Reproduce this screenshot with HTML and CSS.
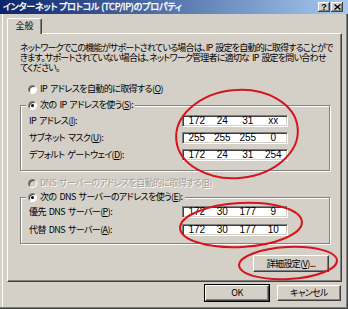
FILE: index.html
```html
<!DOCTYPE html>
<html lang="ja">
<head>
<meta charset="utf-8">
<title>インターネット プロトコル (TCP/IP)のプロパティ</title>
<link rel="stylesheet" href="styles.css">
</head>
<body>
<div class="window">
  <div class="titlebar">
    <span class="title">インターネット プロトコル (TCP/IP)のプロパティ</span>
    <div class="tbtns">
      <span class="tbtn help">?</span>
      <span class="tbtn close"><svg width="7" height="6" viewBox="0 0 7 6"><path d="M0.5 0.5 L6.5 5.5 M6.5 0.5 L0.5 5.5" stroke="#000" stroke-width="1.4" fill="none"/></svg></span>
    </div>
  </div>
  <div class="tabs"><div class="tab">全般</div></div>
  <div class="panel">
    <div class="desc">
      <div class="line">ネットワークでこの機能がサポートされている場合は、IP 設定を自動的に取得することがで</div>
      <div class="line">きます。サポートされていない場合は、ネットワーク管理者に適切な IP 設定を問い合わせ</div>
      <div class="line">てください。</div>
    </div>
    <div class="opt opt-ip-auto"><span class="radio"></span><span>IP アドレスを自動的に取得する(<u>O</u>)</span></div>
    <div class="group group-ip">
      <div class="legend"><span class="radio on"></span><span>次の IP アドレスを使う(<u>S</u>):</span></div>
      <div class="rows rows-ip">
        <span class="lbl">IP アドレス(<u>I</u>):</span>
        <div class="ip"><span>172</span><span>24</span><span>31</span><span>xx</span></div>
        <span class="lbl">サブネット マスク(<u>U</u>):</span>
        <div class="ip"><span>255</span><span>255</span><span>255</span><span>0</span></div>
        <span class="lbl">デフォルト ゲートウェイ(<u>D</u>):</span>
        <div class="ip"><span>172</span><span>24</span><span>31</span><span>254</span></div>
      </div>
    </div>
    <div class="opt opt-dns-auto disabled"><span class="radio off"></span><span>DNS サーバーのアドレスを自動的に取得する(<u>B</u>)</span></div>
    <div class="group group-dns">
      <div class="legend"><span class="radio on"></span><span>次の DNS サーバーのアドレスを使う(<u>E</u>):</span></div>
      <div class="rows rows-dns">
        <span class="lbl">優先 DNS サーバー(<u>P</u>):</span>
        <div class="ip"><span>172</span><span>30</span><span>177</span><span>9</span></div>
        <span class="lbl">代替 DNS サーバー(<u>A</u>):</span>
        <div class="ip"><span>172</span><span>30</span><span>177</span><span>10</span></div>
      </div>
    </div>
    <div class="adv-row"><button class="btn adv">詳細設定(<u>V</u>)...</button></div>
  </div>
  <div class="footer">
    <button class="btn ok">OK</button>
    <button class="btn cancel">キャンセル</button>
  </div>
  <svg class="marks" width="348" height="309" viewBox="0 0 348 309">
    <ellipse cx="237" cy="134" rx="61" ry="44" transform="rotate(-6 237 134)"/>
    <ellipse cx="241" cy="225" rx="61" ry="22" transform="rotate(-3 241 225)"/>
    <ellipse cx="288" cy="263" rx="49" ry="16" transform="rotate(-3 288 263)"/>
  </svg>
</div>
</body>
</html>
```
FILE: styles.css
```css
* { box-sizing: border-box; }
html, body { margin: 0; padding: 0; }
body {
  background: #D4D0C8;
  font-family: "Noto Sans CJK JP", "Noto Sans", sans-serif;
  color: #000;
}
u { text-decoration-thickness: 1px; text-underline-offset: 1px; }

.window {
  position: relative;
  width: 348px;
  height: 309px;
  background: #D4D0C8;
  box-shadow: inset -1px -1px #404040, inset -2px -2px #808080, inset 2px 0 #D4D0C8, inset 3px 0 #fff;
  overflow: hidden;
  font-size: 9px;
  line-height: 12px;
  letter-spacing: -0.6px;
  word-spacing: 1.5px;
  font-feature-settings: "palt";
}

.titlebar {
  height: 14px;
  background: linear-gradient(to right, #0A246A, #A6CAF0);
  display: flex;
  align-items: center;
  justify-content: space-between;
  padding: 0 5px 0 3px;
}
.title {
  color: #fff;
  font-weight: normal;
  -webkit-text-stroke: 0.35px #fff;
  font-size: 9px;
  line-height: 14px;
  white-space: nowrap;
  letter-spacing: -0.15px;
  word-spacing: 0;
}
.tbtns { display: flex; gap: 1px; }
.tbtn {
  width: 12px;
  height: 10px;
  background: #D4D0C8;
  box-shadow: inset -1px -1px #404040, inset 1px 1px #fff, inset -2px -2px #808080;
  display: flex;
  align-items: center;
  justify-content: center;
  font-family: "Liberation Sans", sans-serif;
  font-size: 9px;
  font-weight: bold;
  letter-spacing: 0;
  line-height: 1;
}

.tabs { height: 19px; padding: 4px 0 0 7px; display: flex; }
.tab {
  position: relative;
  z-index: 1;
  width: 35px;
  height: 16px;
  background: #D4D0C8;
  border-top: 1px solid #fff;
  border-left: 1px solid #fff;
  border-right: 1px solid #404040;
  border-radius: 2px 2px 0 0;
  box-shadow: inset -1px 0 #808080;
  display: flex;
  align-items: center;
  justify-content: center;
  letter-spacing: 0;
  padding-bottom: 1px;
}

.panel {
  margin-left: 7px;
  width: 335px;
  height: 249px;
  border: 1px solid;
  border-color: #fff #404040 #404040 #fff;
  box-shadow: inset -1px -1px #808080;
  padding: 9px 11px 0 12px;
  display: flex;
  flex-direction: column;
  align-items: stretch;
}

.desc { height: 30px; line-height: 10px; letter-spacing: -0.78px; }
.line { white-space: nowrap; }

.opt { display: flex; align-items: center; gap: 3px; height: 12px; padding-left: 8px; white-space: nowrap; }
.opt-ip-auto { margin-top: 10px; }
.opt-dns-auto { margin-top: 6px; }
.disabled { color: #A09E98; text-shadow: 1px 1px 0 #fff; }

.radio {
  position: relative;
  flex: none;
  width: 9px;
  height: 9px;
  border-radius: 50%;
  background: #fff;
  border: 1px solid;
  border-color: #808080 #fff #fff #808080;
  box-shadow: inset 1px 1px #404040;
}
.radio.off { background: #D4D0C8; }
.radio.on::after {
  content: "";
  position: absolute;
  left: 2px;
  top: 2px;
  width: 3px;
  height: 3px;
  border-radius: 50%;
  background: #000;
}

.group {
  display: flex;
  flex-direction: column;
  align-items: flex-start;
  border: 1px solid #808080;
  box-shadow: 1px 1px 0 #fff, inset 1px 1px 0 #fff;
}
.group-ip { margin-top: 10px; height: 66px; }
.group-dns { margin-top: 8px; height: 47px; }
.legend {
  display: flex;
  align-items: center;
  gap: 3px;
  height: 12px;
  margin: -7px 0 0 5px;
  padding: 0 2px;
  background: #D4D0C8;
  white-space: nowrap;
}

.rows {
  display: grid;
  grid-template-columns: 153px 106px;
  grid-auto-rows: 12px;
  align-items: center;
  padding-left: 8px;
}
.rows-ip { margin-top: 4px; row-gap: 5px; }
.rows-dns { margin-top: 3px; row-gap: 6px; }
.lbl { white-space: nowrap; }

.ip {
  height: 12px;
  background: #fff;
  border: 1px solid;
  border-color: #808080 #fff #fff #808080;
  box-shadow: inset 1px 1px #404040, inset -1px -1px #D4D0C8;
  display: grid;
  grid-template-columns: repeat(4, 1fr);
  align-items: center;
  justify-items: center;
  font-family: "Liberation Sans", sans-serif;
  font-size: 10px;
  line-height: 10px;
  letter-spacing: 0;
  padding: 0 1px;
}

.adv-row { display: flex; justify-content: flex-end; margin-top: 11px; padding-right: 1px; }

.btn {
  height: 17px;
  padding: 0;
  background: #D4D0C8;
  border: 1px solid;
  border-color: #fff #404040 #404040 #fff;
  box-shadow: inset -1px -1px #808080;
  font: inherit;
  letter-spacing: inherit;
  word-spacing: inherit;
  font-feature-settings: inherit;
  color: #000;
  display: flex;
  align-items: center;
  justify-content: center;
}
.adv { width: 76px; }

.footer { display: flex; justify-content: flex-end; gap: 8px; margin-top: 3px; padding-right: 7px; }
.footer .btn { width: 64px; height: 16px; }
.ok { outline: 1px solid #000; outline-offset: 0; }

.marks {
  position: absolute;
  left: 0;
  top: 0;
  pointer-events: none;
}
.marks ellipse { fill: none; stroke: #D7141E; stroke-width: 2; }
```
